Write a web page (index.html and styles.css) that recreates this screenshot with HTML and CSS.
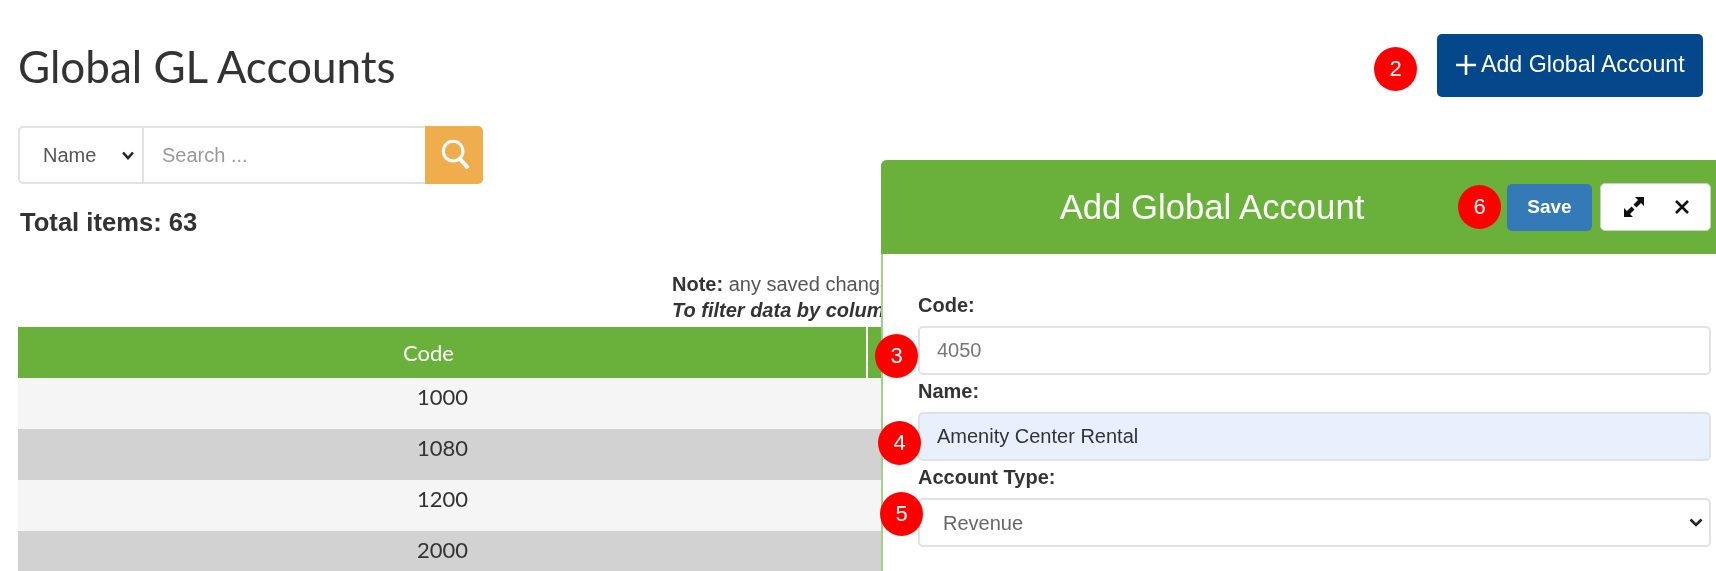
FILE: index.html
```html
<!DOCTYPE html>
<html lang="en">
<head>
  <meta charset="UTF-8">
  <title>Global GL Accounts</title>
  <link rel="stylesheet" href="styles.css">
</head>
<body>
  <div id="page">
    <div class="topBar">
      <h1>Global GL Accounts</h1>
      <button class="addButton">
        <svg width="20" height="20" viewBox="0 0 20 20"><path d="M10 0V20M0 10H20" stroke="#fff" stroke-width="2.6"/></svg>
        Add Global Account
      </button>
    </div>

    <div class="searchBox">
      <select class="searchField"><option>Name</option></select>
      <input class="searchInput" type="text" placeholder="Search ...">
      <button class="searchButton">
        <svg width="30" height="30" viewBox="0 0 32 32" fill="none" stroke="#fff"><circle cx="14" cy="13" r="10.5" stroke-width="3.2"/><path d="M21 21L30 31" stroke-width="4.2"/></svg>
      </button>
    </div>

    <p class="total">Total items: 63</p>

    <div class="note">
      <div><b>Note:</b> any saved changes</div>
      <div class="noteFilter">To filter data by column</div>
    </div>

    <table class="accounts">
      <thead>
        <tr><th class="codeCol"><span>Code</span></th><th>Name</th></tr>
      </thead>
      <tbody>
        <tr><td>1000</td><td>Cash</td></tr>
        <tr><td>1080</td><td>Reserves</td></tr>
        <tr><td>1200</td><td>Receivables</td></tr>
        <tr><td>2000</td><td>Payables</td></tr>
      </tbody>
    </table>
  </div>

  <div class="modal">
    <div class="modalHead">
      <h2>Add Global Account</h2>
      <button class="saveButton">Save</button>
      <div class="windowButtons">
        <svg width="22" height="22" viewBox="0 0 22 22" fill="#111"><path d="M12 1H21V10L18 7L13.5 11.5L10.5 8.5L15 4ZM10 21H1V12L4 15L8.5 10.5L11.5 13.5L7 18Z"/></svg>
        <svg width="16" height="16" viewBox="0 0 16 16"><path d="M2 2L14 14M14 2L2 14" stroke="#111" stroke-width="2.6"/></svg>
      </div>
    </div>
    <div class="modalBody">
      <div class="field">
        <label>Code:</label>
        <input type="text" placeholder="4050">
      </div>
      <div class="field">
        <label>Name:</label>
        <input class="filled" type="text" value="Amenity Center Rental">
      </div>
      <div class="field">
        <label>Account Type:</label>
        <select><option>Revenue</option></select>
      </div>
    </div>
  </div>

  <span class="badge badge2">2</span>
  <span class="badge badge3">3</span>
  <span class="badge badge4">4</span>
  <span class="badge badge5">5</span>
  <span class="badge badge6">6</span>
</body>
</html>
```

FILE: styles.css
```css
html, body {
  margin: 0;
  height: 100%;
  overflow: hidden;
}
body {
  position: relative;
  font-family: "Liberation Sans", Arial, sans-serif;
  font-size: 20px;
  color: #333;
  background-color: #fff;
}
/* the reference is a soft, upscaled capture */
#page, .modal, .badge {
  filter: blur(0.4px);
}
#page {
  padding: 34px 0 0 18px;
}
.topBar {
  display: flex;
  justify-content: space-between;
  align-items: center;
  padding-right: 13px;
}
h1 {
  margin: 0;
  font-family: Lato, sans-serif;
  font-size: 44px;
  font-weight: 400;
  color: #333;
}
.addButton {
  display: flex;
  align-items: center;
  gap: 5px;
  width: 266px;
  height: 63px;
  padding: 0 0 2px 19px;
  border: none;
  border-radius: 5px;
  background-color: #04478a;
  color: #fff;
  font-family: inherit;
  font-size: 23.2px;
  white-space: nowrap;
}

.searchBox {
  display: flex;
  width: 465px;
  height: 58px;
  margin-top: 29px;
}
.searchField {
  appearance: none;
  width: 125px;
  padding-left: 23px;
  border: 2px solid #e2e2e2;
  border-right-width: 1px;
  border-radius: 5px 0 0 5px;
  background: #fff url("data:image/svg+xml,%3Csvg xmlns='http://www.w3.org/2000/svg' width='12' height='9'%3E%3Cpath d='M1 1.5L6 7L11 1.5' fill='none' stroke='%23222' stroke-width='2.6'/%3E%3C/svg%3E") no-repeat right 8px center;
  color: #555;
  font-family: inherit;
  font-size: 20px;
}
.searchInput {
  flex: 1;
  min-width: 0;
  padding: 0 18px;
  border: 2px solid #e2e2e2;
  border-left-width: 1px;
  border-right: none;
  font-family: inherit;
  font-size: 20px;
}
.searchInput::placeholder {
  color: #999;
}
.searchButton {
  display: flex;
  align-items: center;
  justify-content: center;
  width: 58px;
  padding: 0 0 2px 2px;
  border: none;
  border-radius: 0 5px 5px 0;
  background-color: #f0ad4e;
}

.total {
  margin: 24px 0 0 2px;
  font-size: 25.6px;
  font-weight: bold;
  line-height: 28px;
}
.note {
  margin: 35px 0 0 654px;
  color: #555;
  line-height: 26px;
  white-space: nowrap;
}
.note b {
  color: #333;
}
.noteFilter {
  font-style: italic;
  font-weight: bold;
  color: #333;
}

.accounts {
  width: 100%;
  margin-top: 4px;
  border-collapse: collapse;
  table-layout: fixed;
  font-family: Lato, sans-serif;
  font-size: 22px;
}
.accounts th {
  height: 51px;
  padding: 0;
  background-color: #69b13b;
  color: #fff;
  font-weight: 400;
  border-left: 2px solid #fff;
}
.accounts th:first-child {
  border-left: none;
}
.codeCol {
  width: 848px;
}
.codeCol span {
  margin-right: 27px;
}
.accounts td {
  padding: 5px 0 18px;
  line-height: 28px;
  text-align: center;
}
.accounts tr:nth-child(odd) td {
  background-color: #f5f5f5;
}
.accounts tr:nth-child(even) td {
  background-color: #d2d2d2;
}

.modal {
  position: absolute;
  top: 160px;
  left: 881px;
  right: 0;
  bottom: 0;
  background-color: #fff;
  border-left: 2px solid #a3d088;
  border-radius: 6px 0 0 0;
  box-sizing: border-box;
}
.modalHead {
  display: flex;
  align-items: center;
  height: 94px;
  padding-right: 5px;
  background-color: #69b13b;
  border-radius: 6px 0 0 0;
  margin-left: -2px;
}
.modalHead h2 {
  flex: 1;
  margin: 0;
  padding-left: 36px;
  color: #fff;
  font-size: 34.7px;
  font-weight: 400;
  text-align: center;
  white-space: nowrap;
}
.saveButton {
  width: 85px;
  height: 47px;
  margin-right: 8px;
  border: none;
  border-radius: 5px;
  background-color: #337ab7;
  color: #fff;
  font-family: inherit;
  font-size: 19px;
  font-weight: bold;
}
.windowButtons {
  display: flex;
  align-items: center;
  justify-content: space-between;
  box-sizing: border-box;
  width: 111px;
  height: 48px;
  padding: 0 20px 0 22px;
  border: 1px solid #ccc;
  border-radius: 5px;
  background-color: #fff;
}
.modalBody {
  padding: 40px 5px 0 35px;
}
.field {
  margin-bottom: 5px;
}
.field label {
  display: block;
  margin-bottom: 10px;
  font-weight: bold;
  line-height: 22px;
}
.field input,
.field select {
  display: block;
  box-sizing: border-box;
  width: 100%;
  height: 49px;
  padding: 0 17px;
  border: 2px solid #e2e2e2;
  border-radius: 5px;
  background-color: #fff;
  font-family: inherit;
  font-size: 20px;
  color: #333;
}
.field input::placeholder {
  color: #777;
}
.field input.filled {
  background-color: #e8f0fe;
}
.field select {
  appearance: none;
  background: #fff url("data:image/svg+xml,%3Csvg xmlns='http://www.w3.org/2000/svg' width='14' height='9'%3E%3Cpath d='M1.5 1.5L7 7L12.5 1.5' fill='none' stroke='%23222' stroke-width='2.6'/%3E%3C/svg%3E") no-repeat right 6px center;
  color: #666;
  padding-left: 23px;
}

.badge {
  position: absolute;
  display: flex;
  align-items: center;
  justify-content: center;
  width: 43px;
  height: 44px;
  border-radius: 50%;
  background-color: #f00;
  color: #fff;
  font-size: 22px;
}
.badge2 { top: 47px; left: 1374px; }
.badge3 { top: 334px; left: 875px; }
.badge4 { top: 421px; left: 878px; }
.badge5 { top: 492px; left: 880px; }
.badge6 { top: 185px; left: 1458px; }
```
